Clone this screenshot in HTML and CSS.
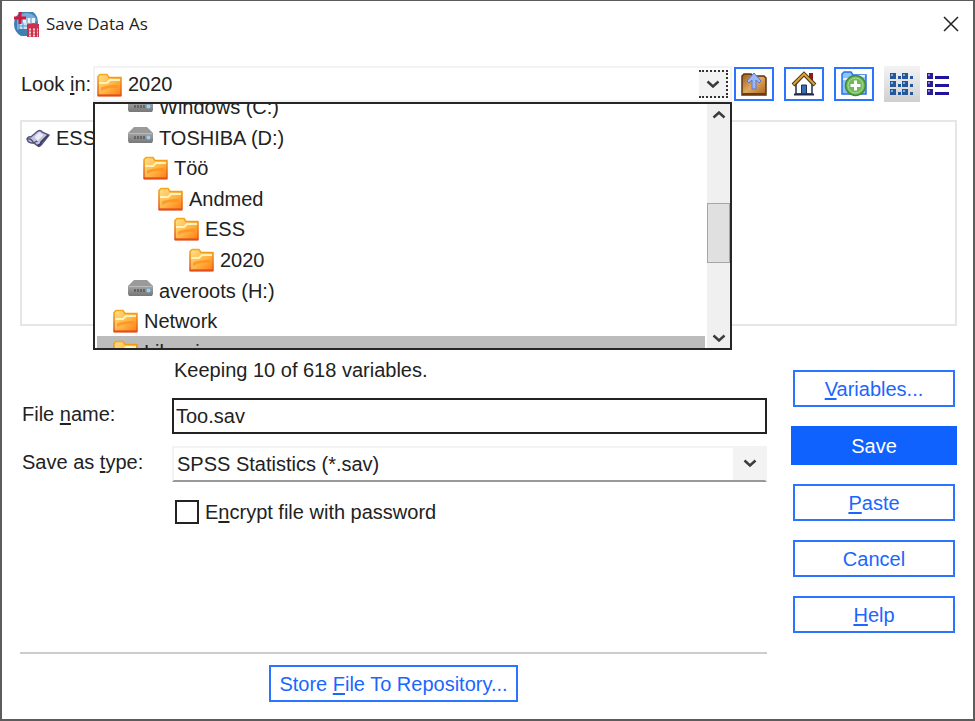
FILE: index.html
```html
<!DOCTYPE html>
<html lang="en">
<head>
    <meta charset="UTF-8">
    <meta name="viewport" content="width=device-width, initial-scale=1.0">
    <title>Save Data As</title>
    <link rel="stylesheet" href="styles.css">
</head>
<body>
    <!-- Shared icons -->
    <svg class="sprite" aria-hidden="true">
        <defs>
            <linearGradient id="folder-fill" x1="0" y1="0" x2="1" y2="1">
                <stop offset="0" stop-color="#ffe08a" />
                <stop offset="0.55" stop-color="#ffb545" />
                <stop offset="1" stop-color="#ff7a10" />
            </linearGradient>
            <linearGradient id="folder-edge" x1="0" y1="0" x2="0" y2="1">
                <stop offset="0" stop-color="#f5a818" />
                <stop offset="1" stop-color="#e2521c" />
            </linearGradient>
            <linearGradient id="drive-fill" x1="0" y1="0" x2="0" y2="1">
                <stop offset="0" stop-color="#a4a4a4" />
                <stop offset="1" stop-color="#777" />
            </linearGradient>
            <linearGradient id="box-fill" x1="0" y1="0" x2="1" y2="1">
                <stop offset="0" stop-color="#9a5a20" />
                <stop offset="0.5" stop-color="#e0a860" />
                <stop offset="1" stop-color="#a8621c" />
            </linearGradient>
        </defs>
        <symbol id="folder" viewBox="0 0 25 24">
            <path d="M1 22.500V3.500L3 1.500h7L12 4.500h12v18z" fill="url(#folder-fill)" stroke="url(#folder-edge)" stroke-width="1.500" />
            <path d="M2 10h8l3-3h10" fill="none" stroke="#fff3b8" stroke-width="2" />
            <path d="M4 14.500q6-3 17-2.500v3q-10-1-17 3z" fill="#ff8d1e" opacity="0.750" />
            <path d="M1 22.500h23" stroke="#e04e1c" stroke-width="2" />
        </symbol>
        <symbol id="drive" viewBox="0 0 25 16">
            <path d="M6 0h13l6 6H0z" fill="#9a9a9a" />
            <path d="M0 6h25v8l-1 2H1l-1-2z" fill="url(#drive-fill)" />
            <path d="M1 6.500h23" stroke="#bbb" />
            <path d="M7 9v3M10 9v3M13 9v3M16 9v3" stroke="#555" stroke-width="1.500" />
            <circle cx="20.500" cy="10.500" r="2" fill="#8ad4ff" />
        </symbol>
        <symbol id="chevron" viewBox="0 0 14 8">
            <path d="M1.500 1.500L7 6.500l5.500-5" fill="none" stroke="#3c3c3c" stroke-width="2.500" />
        </symbol>
    </svg>

    <div class="dialog">
        <header class="title-bar">
            <svg class="app-icon" viewBox="0 0 26 26">
                <path d="M8 1h12q5 3 5 12v12H8q-7-4-7-12Q1 5 8 1z" fill="#3f7fb5" />
                <path d="M4 19V8q3-6 9-6 9 0 11 8z" fill="#78acd6" />
                <path d="M10 7h12v5H10z" fill="#e8f2fa" />
                <path d="M7 12h7v6H7z" fill="#cfe2f2" />
                <path d="M14 7v5M18 7v5M7 15h7M10 12v6" stroke="#5b93c4" />
                <path d="M14 13h12v13H14z" fill="#c8324c" />
                <path d="M16 18.500h2M20 18.500h2M24 18.500h1M16 21.500h2M20 21.500h2M24 21.500h1M16 24.500h2M20 24.500h2M24 24.500h1" stroke="#f7cdd4" stroke-width="2" />
                <path d="M7 1v12M1 7h12" stroke="#d5143a" stroke-width="3" />
            </svg>
            <h1>Save Data As</h1>
            <button class="close" aria-label="Close">
                <svg viewBox="0 0 16 16"><path d="M1 1l14 14M15 1L1 15" stroke="#222" stroke-width="1.500" /></svg>
            </button>
        </header>

        <main class="content">
            <div class="look-in">
                <label for="folder-select">Look <u>i</u>n:</label>
                <div class="folder-box">
                    <select id="folder-select">
                        <option>2020</option>
                    </select>
                    <svg class="folder-icon"><use href="#folder" /></svg>
                    <span class="focus-arrow"><svg class="chevron"><use href="#chevron" /></svg></span>

                    <div class="drop-down">
                        <ul class="places">
                            <li class="level-2"><svg class="drive-icon"><use href="#drive" /></svg>Windows (C:)</li>
                            <li class="level-2"><svg class="drive-icon"><use href="#drive" /></svg>TOSHIBA (D:)</li>
                            <li class="level-3"><svg class="folder-icon"><use href="#folder" /></svg>Töö</li>
                            <li class="level-4"><svg class="folder-icon"><use href="#folder" /></svg>Andmed</li>
                            <li class="level-5"><svg class="folder-icon"><use href="#folder" /></svg>ESS</li>
                            <li class="level-6"><svg class="folder-icon"><use href="#folder" /></svg>2020</li>
                            <li class="level-2"><svg class="drive-icon"><use href="#drive" /></svg>averoots (H:)</li>
                            <li class="level-1"><svg class="folder-icon"><use href="#folder" /></svg>Network</li>
                            <li class="level-1 selected"><svg class="folder-icon"><use href="#folder" /></svg>Libraries</li>
                        </ul>
                        <div class="scroll-bar">
                            <button aria-label="Scroll up"><svg class="chevron up"><use href="#chevron" /></svg></button>
                            <div class="scroll-track"><div class="scroll-thumb"></div></div>
                            <button aria-label="Scroll down"><svg class="chevron"><use href="#chevron" /></svg></button>
                        </div>
                    </div>
                </div>

                <div class="tools">
                    <button class="tool" aria-label="Up one level">
                        <svg viewBox="0 0 26 26">
                            <path d="M1 24V5l2-2h7l2 2h11l2 2v17z" fill="url(#box-fill)" stroke="#5c3410" stroke-width="1.500" />
                            <path d="M2 23h22" stroke="#6b3c12" stroke-width="2" />
                            <path d="M13 2l7 8-2 2-3-3v9h-4V9l-3 3-2-2z" fill="#9db8f5" stroke="#5a78d0" />
                        </svg>
                    </button>
                    <button class="tool" aria-label="Home">
                        <svg viewBox="0 0 26 26">
                            <path d="M18 2h4v9h-4z" fill="#8c1a1a" />
                            <path d="M5 13l8-9 8 9v10H5z" fill="#fff" stroke="#222c50" stroke-width="1.500" />
                            <path d="M10.500 14h5v9h-5z" fill="#3d6fb0" stroke="#1c2c5c" />
                            <path d="M2 14L13 3l11 11" fill="none" stroke="#4a3410" stroke-width="4" />
                            <path d="M2.500 13.500L13 3l10.500 10.500" fill="none" stroke="#e0a038" stroke-width="2" />
                            <path d="M3 23.500h20" stroke="#222c50" stroke-width="2" />
                        </svg>
                    </button>
                    <button class="tool" aria-label="New folder">
                        <svg viewBox="0 0 26 26">
                            <path d="M1 23V3l2-2h7l2 3h13v19z" fill="#8cc4ff" stroke="#2a6ff0" stroke-width="1.500" />
                            <path d="M2 8h8l3-3h11" fill="none" stroke="#e4f2ff" stroke-width="2" />
                            <circle cx="14.500" cy="14.500" r="10" fill="#6fbb5a" stroke="#438a36" stroke-width="1.500" />
                            <circle cx="14.500" cy="14.500" r="7.500" fill="none" stroke="#a9dd98" />
                            <path d="M14.500 9.500v10M9.500 14.500h10" stroke="#fff" stroke-width="3" />
                        </svg>
                    </button>
                    <button class="view active" aria-label="List view">
                        <svg viewBox="0 0 24 22">
                            <path d="M0 0h6v6H0zM12 0h6v6h-6zM0 8h6v6H0zM12 8h6v6h-6zM0 16h6v6H0zM12 16h6v6h-6z" fill="#24569c" />
                            <path d="M8 3h3v3H8zM20 3h3v3h-3zM8 11h3v3H8zM20 11h3v3h-3zM8 19h3v3H8zM20 19h3v3h-3z" fill="#24569c" />
                            <path d="M1 1h2v2H1zM13 1h2v2h-2zM1 9h2v2H1zM13 9h2v2h-2zM1 17h2v2H1zM13 17h2v2h-2z" fill="#86aee0" />
                        </svg>
                    </button>
                    <button class="view" aria-label="Details view">
                        <svg viewBox="0 0 24 22">
                            <path d="M1 0h6v6H1zM1 8h6v6H1zM1 16h6v6H1z" fill="#2a1c94" />
                            <path d="M2 1h2v2H2zM2 9h2v2H2zM2 17h2v2H2z" fill="#8c84d4" />
                            <path d="M9 4.500h14M9 12.500h14M9 20.500h14" stroke="#2012a0" stroke-width="3" />
                        </svg>
                    </button>
                </div>
            </div>

            <div class="file-list">
                <div class="file">
                    <svg class="file-icon" viewBox="0 0 25 20">
                        <path d="M1 11q1-3 4-2l7-6q3-2 5 1l7 3-8 10q-2 3-4 1l-4-3q-6 1-7-4z" fill="#c4c4de" stroke="#54547c" stroke-width="1.500" />
                        <path d="M1 11q4-1 7 4l4-2" fill="none" stroke="#54547c" stroke-width="1.500" />
                        <path d="M9 9l5-5 4 3-6 6z" fill="#ececf8" />
                        <path d="M12 17q3 1 4-3l7-7" fill="none" stroke="#3c3c64" stroke-width="2" />
                    </svg>
                    ESS
                </div>
            </div>

            <div class="lower">
                <form class="form">
                    <p class="keeping">Keeping 10 of 618 variables.</p>
                    <label for="file-name">File <u>n</u>ame:</label>
                    <input type="text" id="file-name" value="Too.sav">
                    <label for="file-type">Save as <u>t</u>ype:</label>
                    <div class="type-box">
                        <select id="file-type">
                            <option>SPSS Statistics (*.sav)</option>
                        </select>
                        <span class="type-arrow"><svg class="chevron"><use href="#chevron" /></svg></span>
                    </div>
                    <div class="encrypt">
                        <input type="checkbox" id="encrypt">
                        <label for="encrypt">E<u>n</u>crypt file with password</label>
                    </div>
                </form>

                <div class="actions">
                    <button class="btn"><u>V</u>ariables...</button>
                    <button class="btn primary">Save</button>
                    <button class="btn"><u>P</u>aste</button>
                    <button class="btn">Cancel</button>
                    <button class="btn"><u>H</u>elp</button>
                </div>

                <div class="repository">
                    <button class="btn">Store <u>F</u>ile To Repository...</button>
                </div>
            </div>
        </main>
    </div>
</body>
</html>
```
FILE: styles.css
```css
* {
    box-sizing: border-box;
}

body {
    margin: 0;
    background-color: #fff;
    color: #222;
    font-family: "Liberation Sans", Arial, sans-serif;
    font-size: 20px;
    line-height: 24px;
}

button, input, select {
    margin: 0;
    color: inherit;
    font: inherit;
}

button {
    display: flex;
    align-items: center;
    justify-content: center;
    padding: 0;
    border: none;
    background: none;
}

svg {
    display: block;
    flex: none;
}

u {
    text-decoration-thickness: 2px;
    text-decoration-skip-ink: none;
    text-underline-offset: 2px;
}

.sprite {
    position: absolute;
    width: 0;
    height: 0;
}

.dialog {
    min-height: 100vh;
    border: 2px solid #5c5c5c;
    border-top-width: 1px;
}

/* Title bar */

.title-bar {
    display: flex;
    align-items: center;
    gap: 7px;
    height: 45px;
    padding: 0 14px 0 11px;
}

.title-bar h1 {
    flex: 1;
    margin: 0;
    font-family: "Open Sans", sans-serif;
    font-size: 17px;
    font-weight: 400;
}

.app-icon {
    width: 26px;
    height: 26px;
}

.close svg {
    width: 16px;
    height: 16px;
}

.content {
    padding: 20px 16px 14px 18px;
}

/* Folder row */

.look-in {
    display: flex;
    align-items: center;
    height: 36px;
}

.look-in > label {
    width: 73px;
    padding-left: 1px;
    white-space: nowrap;
}

.folder-box {
    position: relative;
    flex: 1;
    height: 36px;
}

.folder-box select {
    appearance: none;
    width: 100%;
    height: 36px;
    padding: 0 36px 0 33px;
    border: 2px solid #f3f3f3;
    border-radius: 0;
    background-color: #fff;
}

.folder-icon {
    width: 25px;
    height: 24px;
}

.folder-box > .folder-icon {
    position: absolute;
    top: 7px;
    left: 4px;
}

.focus-arrow {
    position: absolute;
    top: 4px;
    right: 4px;
    display: flex;
    align-items: center;
    justify-content: center;
    width: 29px;
    height: 28px;
    border: 2px dotted #333;
    border-left: none;
    background-color: #f3f3f3;
    pointer-events: none;
}

.chevron {
    width: 14px;
    height: 8px;
}

.chevron.up {
    transform: rotate(180deg);
}

.drop-down {
    position: absolute;
    top: 36px;
    left: 0;
    right: 0;
    z-index: 10;
    display: flex;
    height: 248px;
    overflow: hidden;
    border: 2px solid #262626;
    background-color: #fff;
}

.places {
    display: grid;
    grid-template-rows: repeat(9, 1fr);
    flex: 1;
    height: 275px;
    margin: -12px 2px 0;
    padding: 0;
    list-style: none;
}

.places li {
    display: flex;
    align-items: center;
    gap: 6px;
}

.places .selected {
    background-color: #bcbcbc;
}

.level-1 {
    padding-left: 16px;
}

.level-2 {
    padding-left: 31px;
}

.level-3 {
    padding-left: 46px;
}

.level-4 {
    padding-left: 61px;
}

.level-5 {
    padding-left: 77px;
}

.level-6 {
    padding-left: 92px;
}

.drive-icon {
    width: 25px;
    height: 16px;
    margin-bottom: 6px;
}

.scroll-bar {
    display: flex;
    flex-direction: column;
    width: 23px;
    background-color: #f0f0f0;
}

.scroll-bar button {
    height: 21px;
}

.scroll-track {
    flex: 1;
    padding-top: 78px;
}

.scroll-thumb {
    height: 60px;
    border: 1px solid #a6a6a6;
    background-color: #e0e0e0;
}

/* Toolbar */

.tools {
    display: flex;
    align-items: center;
    padding: 0 1px 0 2px;
}

.tool {
    width: 40px;
    height: 34px;
    margin-right: 10px;
    border: 2px solid #2a74ff;
}

.tool svg {
    width: 26px;
    height: 26px;
}

.view {
    width: 36px;
    height: 36px;
}

.view.active {
    background-image: linear-gradient(#f4f4f4, #cfcfcf);
}

.view svg {
    width: 24px;
    height: 22px;
}

/* File list */

.file-list {
    height: 206px;
    margin-top: 18px;
    padding: 4px;
    border: 2px solid #e6e6e6;
}

.file {
    display: flex;
    align-items: center;
    gap: 6px;
}

.file-icon {
    width: 24px;
    height: 20px;
}

/* Form and actions */

.lower {
    display: grid;
    grid-template-columns: 1fr 166px;
    column-gap: 24px;
    padding-top: 32px;
}

.form {
    display: grid;
    grid-template-columns: 152px 1fr;
    grid-template-rows: 28px repeat(3, 36px);
    row-gap: 12px;
    align-content: start;
}

.form > label {
    padding: 4px 0 0 2px;
}

.keeping {
    grid-column: 2;
    margin: 0;
    padding-left: 2px;
}

.form input[type="text"] {
    width: 100%;
    height: 36px;
    padding: 0 2px;
    border: 2px solid #222;
    border-radius: 0;
    outline: none;
}

.type-box {
    position: relative;
}

.type-box select {
    appearance: none;
    width: 100%;
    height: 36px;
    padding: 0 36px 0 3px;
    border: 2px solid #f3f3f3;
    border-bottom-color: #999;
    border-radius: 0;
    background-color: #fff;
}

.type-arrow {
    position: absolute;
    top: 0;
    right: 0;
    display: flex;
    align-items: center;
    justify-content: center;
    width: 34px;
    height: 34px;
    background-color: #f3f3f3;
    pointer-events: none;
}

.encrypt {
    grid-column: 2;
    display: flex;
    align-items: center;
    gap: 6px;
    padding-left: 3px;
}

.encrypt input {
    appearance: none;
    width: 24px;
    height: 24px;
    border: 2px solid #222;
    background-color: #fff;
}

.actions {
    display: flex;
    flex-direction: column;
    gap: 19px;
    padding-top: 12px;
}

.btn {
    display: block;
    height: 37px;
    border: 2px solid #2a74ff;
    background-color: #fff;
    color: #1a66ff;
}

.actions .btn {
    margin: 0 2px;
}

.actions .primary {
    height: 39px;
    margin: 0;
    border-color: #0f62fe;
    background-color: #0f62fe;
    color: #fff;
}

.repository {
    display: flex;
    justify-content: center;
    margin-top: 19px;
    padding-top: 11px;
    border-top: 2px solid #ccc;
}

.repository .btn {
    padding: 0 8px;
}
```
